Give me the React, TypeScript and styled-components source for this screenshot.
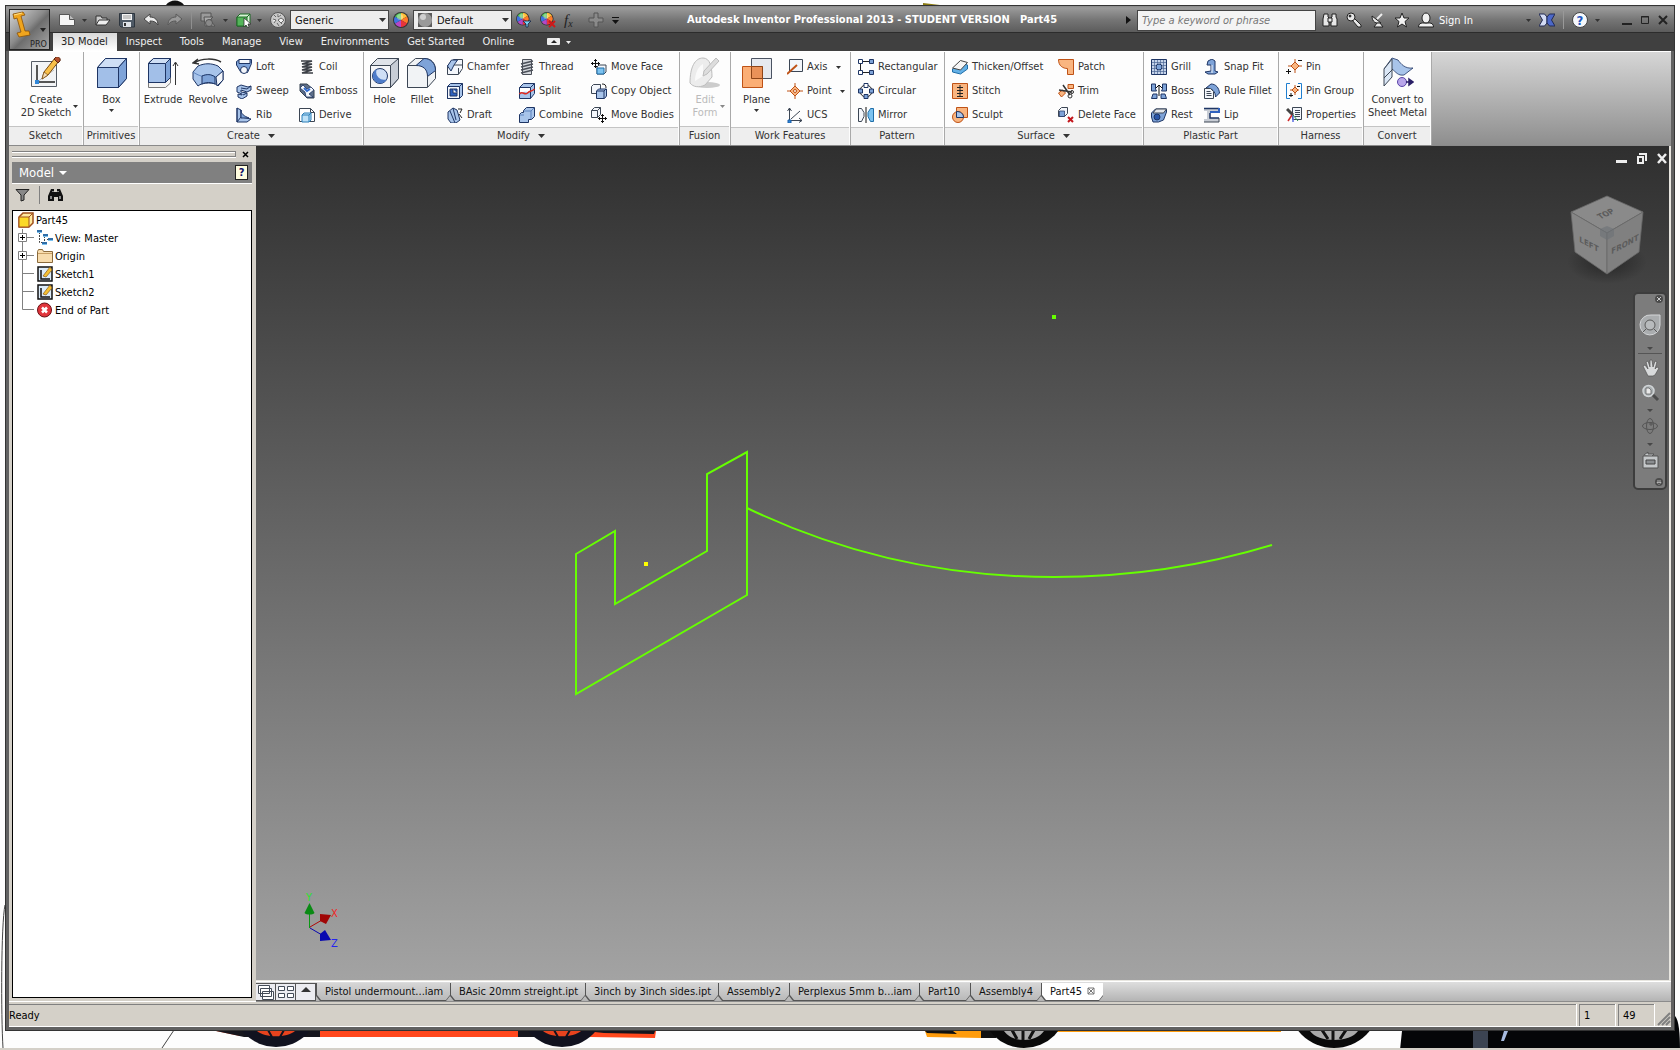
import React from "react";
import styled, { createGlobalStyle, css } from "styled-components";

const FONT = `"DejaVu Sans Condensed", "DejaVu Sans", "Noto Sans", sans-serif`;

const GlobalStyle = createGlobalStyle`
  *, *::before, *::after { box-sizing: border-box; }
  body { margin: 0; background: #fdfdfd; font-family: ${FONT}; font-size: 11px; color: #333; overflow: hidden; }
  button, input, select { font: inherit; color: inherit; }
  button { background: none; border: 0; padding: 0; margin: 0; cursor: default; }
  svg { display: block; flex: none; }
  ul { list-style: none; margin: 0; padding: 0; }
`;

/* ---------- shared palette for the drawings ---------- */
const N = "#1e3564";
const L = "#a8c4ea";
const M = "#7ea3d8";
const W = "#f3f6fb";
const G = "#3c4654";
const O = "#f9b580";
const OD = "#bf5216";

const Caret = ({ color = "#333", size = 5 }: { color?: string; size?: number }) => (
  <svg width={size} height={Math.ceil(size / 2)} viewBox="0 0 6 3" preserveAspectRatio="none" aria-hidden="true">
    <path d="M0 0h6L3 3z" fill={color} />
  </svg>
);

const art: Record<string, React.ReactNode> = {
  newFile: <g><path d="M.5 2.500h10l5 5v6H.5z" fill="#f4f4f4" stroke="#555" /><path d="M10.500 2.500v5h5" fill="#bbb" stroke="#555" /></g>,
  open: <g><path d="M1 13V4h5l1 2h5v2" fill="#ccc" stroke="#333" /><path d="M1 13l3-5h11l-4 5z" fill="#eee" stroke="#333" /></g>,
  save: <g><path d="M.5 1.500h15v13.500H2L.5 13.500z" fill="#4f5a66" stroke="#2d353e" /><path d="M3 2h10v6H3z" fill="#f4f4f4" /><path d="M4 4h8M4 6h8" stroke="#999" /><path d="M4 10h8v5H4z" fill="#dfe3e8" /><path d="M5 11h2v3H5z" fill="#333" /></g>,
  undo: <path d="M1 7l6-5v3c5 0 8 3 8 8-2-3-4-4-8-4v3z" fill="#ececec" stroke="#444" />,
  redo: <path d="M15 7L9 2v3c-5 0-8 3-8 8 2-3 4-4 8-4v3z" fill="#999" stroke="#5a5a5a" />,
  update: <g stroke="#555" fill="#9a9a9a"><path d="M1 1h10v8H1z" /><path d="M4 5h9l-3 3 5 6H5z" fill="#aaa" /><circle cx="9" cy="11" r="3.500" fill="#8a8a8a" /></g>,
  selectCube: <g><path d="M1 5l3-3h10v9l-3 3H1z" fill="#d8f3d6" stroke="#1c6a24" /><path d="M1 5h10v9H1z" fill="#54b45a" stroke="#1c6a24" /><path d="M11 5l3-3" stroke="#1c6a24" /><path d="M8 6v9l2-2 2 3 1-1-1-3h3z" fill="#fff" stroke="#333" strokeWidth=".8" /></g>,
  sphere: <g><circle cx="8" cy="8" r="7.500" fill="#c9c9c9" stroke="#555" /><path d="M4 3l2 2M8 2v3l3-2M3 7l3 1-2 3M8 8l3-2 3 2-3 3zM7 11l2 3M11 12l1-1" stroke="#666" fill="#f4f4f4" /></g>,
  wheel: <g stroke="none"><circle cx="8" cy="8" r="8" fill="#333" /><path d="M8 8V1a7 7 0 0 1 6 3.500z" fill="#ffc038" /><path d="M8 8l6-3.500a7 7 0 0 1 0 7z" fill="#ff7a2a" /><path d="M8 8l6 3.500A7 7 0 0 1 8 15z" fill="#e8343a" /><path d="M8 8v7a7 7 0 0 1-6-3.500z" fill="#b548c8" /><path d="M8 8l-6 3.500a7 7 0 0 1 0-7z" fill="#3f74e0" /><path d="M8 8L2 4.500A7 7 0 0 1 8 1z" fill="#53c25a" /><circle cx="7" cy="5" r="3" fill="#fff" opacity=".35" /></g>,
  ball: <g><path d="M1 1h14v14H1z" fill="#5a5a5a" /><circle cx="8" cy="8" r="7" fill="#9a9a9a" /><circle cx="6" cy="5" r="3" fill="#ddd" opacity=".8" /></g>,
  plus: <path d="M6 1h4v5h5v4h-5v5H6v-5H1V6h5z" fill="#8a8a8a" stroke="#555" />,
  binoc: <g fill="#e8e8e8" stroke="#222"><path d="M2 2h4v3l1 1v8H1V7zM10 2h4v3l1 2v7H9V6l1-1z" /><path d="M6 6h4v4H6z" /></g>,
  key: <g fill="#e8e8e8" stroke="#222"><path d="M6 8l2-2 7 7v2h-3z" /><circle cx="5" cy="5" r="4" /><circle cx="4" cy="4" r="1" fill="#333" /></g>,
  dish: <g fill="#e8e8e8" stroke="#222"><path d="M2 4c0 6 4 8 9 7z" /><path d="M7 11l-3 4h9l-3-4z" /><path d="M7 7l5-5" stroke="#eee" strokeWidth="2" /></g>,
  star: <path d="M8 1l2 5h5l-4 3.500 1.500 5.500L8 12l-4.500 3L5 9.500 1 6h5z" fill="#f2f2f2" stroke="#222" />,
  user: <g fill="#f0f0f0" stroke="#222"><path d="M.5 15c0-3 2-4 4-4h7c2 0 4 1 4 4z" /><ellipse cx="8" cy="6" rx="4" ry="5" /></g>,
  xchange: <g><path d="M0 2h5.500L8 5v6l-2.500 3H0l3.500-6z" fill="#d4dcf4" stroke="#222a55" /><path d="M16 2h-5.500L8 5v6l2.500 3H16l-3.500-6z" fill="#4c68c8" stroke="#222a55" /></g>,
  help: <g><circle cx="8" cy="8" r="7.500" fill="#f6f8fc" stroke="#444" /><text x="8" y="12.500" textAnchor="middle" fontSize="13" fontWeight="700" fill="#1e56c0">?</text></g>,

  loft: <g stroke={N}><path d="M.5 2.500l3-2h12v4l-4 9H5L.5 6z" fill={M} /><path d="M3 .5h11v4H3z" fill={W} /><circle cx="8" cy="11" r="3.500" fill={W} /></g>,
  sweep: <g stroke={N} fill={L}><path d="M1 4l4-2 7 2 3-1v4l-4 2-6-2v2l6 1v3l-5 3-4-2v-3l4 1V11L1 9z" /><path d="M5 5l6 1 4-3M7 12l4-2" fill="none" /></g>,
  rib: <g stroke={N}><path d="M1 1l4 2v7l10 2-4 3H1z" fill={L} /><path d="M5 3c0 4 3 6 8 8H5z" fill={M} /><path d="M1 1v14l4-5" fill="none" /></g>,
  coil: <g fill="none" stroke="#3b3f46" strokeWidth="1.500"><path d="M2 2h11L3 5h10L3 8h10L3 11h10L3 14h11" /></g>,
  emboss: <g><path d="M1 1h7l7 6v8H8L1 8z" fill="#5d6f89" stroke="#35404f" /><path d="M1 5l3-3 4 4 4-2 3 3-5 4 4 3H7L6 9z" fill="#f4f7fb" stroke={N} strokeWidth=".8" /><path d="M5 5l3 3 3-2" stroke="#2f6bd0" strokeWidth="2" fill="none" /></g>,
  derive: <g><path d="M.5 1.500h11l4 4v9H.5z" fill="#fff" stroke={G} /><path d="M11.500 1.500v4h4" fill="none" stroke={G} /><path d="M3 8l2-2h7v7l-2 2H3zM3 8h7v7M10 8l2-2" fill="#bfe2f8" stroke="#2a7fb8" /></g>,
  chamfer: <g stroke={G}><path d="M.5 6.500l6-6h9v9l-4 6H.5z" fill={W} /><path d="M.5 7l4-6h6L7 6l-3 6z" fill={L} stroke={N} /><path d="M7 6h8M11.500 15V9" fill="none" /></g>,
  shell: <g stroke={N}><path d="M.5 3.500l3-3h12v12l-3 3H.5z" fill={L} /><path d="M.5 3.500h12v12H.5z" fill={W} /><path d="M12.500 3.500l3-3" /><path d="M3 6h7v7H3z" fill="#2f62c0" /><path d="M6 6v4h4" fill={W} /></g>,
  draft: <g stroke={N}><path d="M1 5l5-4 4 2 3 10-4 3H4L1 12z" fill={L} /><path d="M6 1l3 12M3 4l5 12" fill="none" /><path d="M12 7l3 4M11 2l4 0-2 4" stroke="#222" fill="none" /></g>,
  thread: <g stroke="#4a4f58"><path d="M3.500.5h9v15h-9z" fill="#d4d7dc" /><path d="M2 5l12-3M2 8l12-3M2 11l12-3M2 14l12-3" strokeWidth="1.500" /></g>,
  split: <g><path d="M.5 4.500l4-4h11v10l-4 5H.5z" fill={L} stroke={N} /><path d="M.5 4.500h11v11M11.500 4.500l4-4" fill="none" stroke={N} /><path d="M1 5h10v4c-4 0-5-1-10 1z" fill="#fff" /><path d="M.5 11c3-4 5 2 8-1s4-1 7-4" stroke="#e02a20" strokeWidth="1.500" fill="none" /></g>,
  combine: <g stroke={N}><path d="M4.500 3.500l3-3h8v9l-3 3h-3v3h-9v-8l2-2h2z" fill={L} /><path d="M5 4h7v8M12 4l3-3M1 8h4" fill="none" stroke="#5c82bd" /></g>,
  moveFace: <g><path d="M6 8l2-2h7v7l-2 2H6z" fill={W} stroke={G} /><path d="M6 9h7v6H6z" fill="#7cc2f0" stroke="#1f6ea8" /><path d="M4.500 0v9M0 4.500h9M3 1.500h3M3 7.500h3M1.500 3v3M7.500 3v3" stroke="#111" /></g>,
  copyObject: <g stroke={N}><path d="M.5 3.500l2-2h7v7l-2 2h-7z" fill={W} stroke={G} /><path d="M5.500 8l2-2h8v7l-2 2.500h-8z" fill={L} /><path d="M6 8h7v7M13 8l2-2" fill="none" /><path d="M11 1c3 0 4 1 4 4" fill="none" stroke="#222" /></g>,
  moveBodies: <g><path d="M.5 3.500l3-3h6v7l-3 3h-6zM.5 3.500h6v7M6.500 3.500l3-3" fill={W} stroke={G} /><path d="M11.500 7v9M7 11.500h9M10 8.500h3M10 14.500h3M8.500 10v3M14.500 10v3" stroke="#111" /></g>,
  axis: <g><path d="M2.500.5h13v12h-13z" fill={W} stroke={G} /><path d="M0 15L10 6" stroke={OD} strokeWidth="2" /></g>,
  point: <g stroke={OD}><path d="M8 3l5 5-5 5-5-5z" fill={O} /><path d="M8 0v3M8 13v3M0 8h3M13 8h3" /><circle cx="8" cy="8" r="1.500" fill="#fff" /></g>,
  ucs: <g stroke={G} fill="none"><path d="M2.500 1v12.500H15M4 12l9-8M.5 4l2-3 2 3M12 11l3 2.500-3 2" /><path d="M1 13h3v3H1z" fill="#2f86d8" stroke="#1b5fa8" /></g>,
  rect: <g fill={L} stroke={N}><path d="M2.500 2.500h12M2.500 13.500h12M2.500 2v12" stroke="#222" /><path d="M.5.5h4v4h-4zM.5 11.500h4v4h-4z" fill="#fff" /><path d="M11.500.5h4v4h-4zM11.500 11.500h4v4h-4z" fill={M} /></g>,
  circ: <g fill={M} stroke={N}><circle cx="8" cy="8" r="6" fill="none" stroke="#222" /><path d="M6 .5h4v4H6z" fill="#fff" /><path d="M.5 6h4v4h-4zM11.500 6h4v4h-4zM6 11.500h4v4H6z" /></g>,
  mirror: <g><path d="M.5 1.500h3l2.500 4v4l-2.500 5h-3z" fill={W} stroke={G} /><path d="M15.500 1.500h-3L10 5.500v4l2.500 5h3z" fill="#7cc2f0" stroke="#1f6ea8" /><path d="M8 0v16" stroke="#111" /></g>,
  thicken: <g><path d="M.5 10l8-6 7 2v4l-7 5-8-2z" fill="#63b0e6" stroke="#1f6ea8" /><path d="M.5 9l8-7.500 7 2-7 7.500z" fill="#f6f6f6" stroke="#444" /></g>,
  stitch: <g><path d="M.5.5h15v15H.5z" fill={O} stroke={OD} /><path d="M8 2v12M5 4.500h6M5 7.500h6M5 10.500h6M5 13.500h6" stroke="#222" /></g>,
  sculpt: <g><path d="M4.500.5h11v10h-11z" fill={O} stroke={OD} /><circle cx="6" cy="10" r="5.500" fill={O} stroke={OD} /><path d="M4.500 4.500c4 0 7 2 7 6h-7z" fill={L} stroke={N} /></g>,
  patch: <path d="M.5.5h15v15H9.500V9.500C5 9.500.5 7 .5.5z" fill={O} stroke={OD} />,
  trim: <g><path d="M10 1.500h5.500v4H10zM.5 10l4-3 3 3-4 4z" fill={O} stroke={OD} /><path d="M5 2l7 10M1 7l13 2" stroke="#333" strokeWidth="1.500" /><circle cx="12" cy="13" r="2" fill="none" stroke="#333" /><circle cx="14" cy="9" r="1.500" fill="none" stroke="#333" /></g>,
  deleteFace: <g><path d="M.5 3.500l3-3h6v6l-3 3h-6z" fill={W} stroke={G} /><path d="M1.500 4h5v5.500h-5z" fill={M} stroke={N} strokeWidth=".7" /><path d="M10 10l5 5M15 10l-5 5" stroke="#c3161c" strokeWidth="2" /></g>,
  grill: <g><path d="M.5.5h15v15H.5z" fill="#c6d4ea" stroke={N} /><path d="M3.500 1v14M6.500 1v14M9.500 1v14M12.500 1v14M1 3.500h14M1 6.500h14M1 9.500h14M1 12.500h14" stroke="#4b6594" strokeWidth=".7" /><circle cx="8" cy="8" r="3" fill={M} stroke={N} /></g>,
  boss: <g stroke={N}><path d="M.5 1h4v5l1 2h-5zM15.500 1h-4v5l-1 2h5zM2 11h4v4.500H.5zM14 11h-4v4.500h5.500z" fill={M} /><path d="M8 13V2M5 5l3-3 3 3" stroke="#111" fill="none" /></g>,
  rest: <g stroke={N}><path d="M.5 6l4-4h11v3l-3 8-5 2H2L.5 10z" fill={M} /><path d="M5 2h10.500l-3 4H2z" fill="#e4e7ec" stroke={G} /><ellipse cx="6" cy="10" rx="3" ry="3" fill="#2a56a8" /></g>,
  snap: <g stroke={N}><path d="M4 2l4-2 3 2v10l3 1-3 2H4l-3-2 6-1V6L3 6z" fill={M} /><path d="M8 6v8" stroke={W} /></g>,
  ruleFillet: <g><path d="M2 5l5-4c5 0 8 4 8.500 9l-4 4c0-5-3-9-9.500-9z" fill={M} stroke={N} /><path d="M.5 5.500h6l3 3v7h-9z" fill={W} stroke={G} /><path d="M2.500 8.500h4M2.500 10.500h5M2.500 12.500h5" stroke={G} /></g>,
  lip: <g><path d="M0 1h15v5H6v5h9v4H0v-3h3V4H0z" fill="#c7ccd4" stroke="none" /><path d="M0 1.500h15M6 6v5h9" stroke={N} strokeWidth="1.500" fill="none" /><path d="M15 1v4H6" stroke="#2f62c0" fill="none" strokeWidth="2" /><path d="M0 15h15v-4" stroke={G} fill="none" /></g>,
  pin: <g stroke={OD}><path d="M9 3l4 4-4 4-4-4z" fill={O} /><path d="M9 0v3M9 11v3M2 7h3M13 7h3" /><path d="M0 12.500h5M2.500 10v5M12 1.500h4" stroke="#111" /></g>,
  pinGroup: <g stroke={OD}><path d="M4 .5H.5v15H4M12 .5h3.500v15H12" fill="none" stroke="#1f7fd0" /><path d="M9 4l3 3-3 3-3-3z" fill={O} /><path d="M9 2v2M9 10v2M4 7h2M12 7h1" /><path d="M3 12.500h4M5 10v4M11 3.500h3" stroke="#111" /></g>,
  props: <g><path d="M6.500.5h9v12h-9z" fill={W} stroke={G} /><path d="M9 3.500h5M9 5.500h5M9 7.500h5M9 9.500h5" stroke={G} /><path d="M1 2l6 6" stroke="#444" strokeWidth="3" /><path d="M6 8l-4 6" stroke="#d02a2a" strokeWidth="1.500" /><path d="M7 8v7" stroke="#5a6de0" strokeWidth="1.500" /><path d="M7 8l5 6" stroke="#2a8f4a" /></g>,

  sketch: <g><path d="M1.500 4.500h25v25h-25z" fill="#f2f4f6" stroke="#555c66" /><path d="M7 8v17h18" fill="none" stroke="#222" strokeWidth="1.500" /><path d="M7 25l17-12" stroke="#bbb" /><path d="M5 23h4v4H5z" fill="#2f86d8" /><path d="M12 22l2-7L25 1l4 3-11 14z" fill="#f8c04a" stroke="#7a4a10" /><path d="M24 2l2-2c2-1 5 1 4 4l-2 2z" fill="#b5502c" stroke="#5c2a14" /><path d="M14 15l4 3-6 4z" fill="#f3dcb4" stroke="#7a4a10" strokeWidth=".7" /></g>,
  box: <g stroke={N}><path d="M1.500 10.500l8-9h21v20l-8 9h-21z" fill={L} /><path d="M1.500 10.500h21v20h-21z" fill="#a2bfe8" /><path d="M1.500 10.500l8-9h21l-8 9z" fill="#cfdff5" /><path d="M22.500 10.500l8-9v20l-8 9z" fill={M} /></g>,
  extrude: <g stroke={N}><path d="M1.500 24h17l5-4v6l-5 4.500h-17z" fill="#f3f3f3" stroke="#777" /><path d="M1.500 6l5-4.500h17v19l-5 5h-17z" fill={M} /><path d="M1.500 6.500h17v19h-17z" fill="#a2bfe8" /><path d="M1.500 6.500l5-5h17l-5 5z" fill="#cfdff5" /><path d="M28.500 28V6M26 9l2.500-4L31 9" stroke="#333" fill="none" /></g>,
  revolve: <g stroke={N}><path d="M1 15l5-6c7-3 13-3 20 0l5 5v9l-5 6c-2-4-16-4-20 0L1 22z" fill={L} /><path d="M1 15c6 4 9 4 9 4s6-3 14 1l7-6" fill="none" stroke="#5b82bd" /><path d="M10 19c5-2 9-2 13 1v7c-4-2-9-2-13 0z" fill={M} /><path d="M24 20l7-6v9l-6 6z" fill={W} /><path d="M2 6C10 1 22 1 29 5M6 2L1 6l6 1" stroke="#333" strokeWidth="1.500" fill="none" /></g>,
  hole: <g stroke={G}><path d="M1.500 8.500l7-7h21v20l-8 9h-20z" fill="#dfe3e9" /><path d="M1.500 8.500h20v22h-20z" fill="#f4f5f7" /><path d="M21.500 8.500l8-7v20l-8 9z" fill="#c7cdd6" /><circle cx="11" cy="19" r="7.500" fill="#cfdff5" stroke={N} /><path d="M8 12a7.500 7.500 0 0 0 10 10 7.500 7.500 0 1 1-10-10z" fill="#4d7bc8" stroke="none" /></g>,
  fillet: <g stroke={G}><path d="M1.500 8.500l8-7h9c7 0 11 5 11 12v8l-8 9h-20z" fill="#f1f3f5" /><path d="M10 8.500l8-7c7 0 11.500 5 11.500 12l-8 6c0-7-4-11-11.500-11z" fill={M} stroke={N} /><path d="M1.500 8.500h9M21.500 19v11M18 30.500h3" fill="none" /></g>,
  form: <g stroke="#bdbdbd"><ellipse cx="18" cy="28" rx="13" ry="3" fill="#ccc" stroke="none" /><path d="M1 26C1 10 6 1 14 1c7 0 9 9 9 19l-7 8c-6 3-12 2-15-2z" fill="#ececec" /><path d="M6 24c0-8 3-14 8-17v12z" fill="#fafafa" stroke="none" /><path d="M14 19l1-5L27 1l3 3-12 13z" fill="#ddd" /></g>,
  plane: <g><path d="M10.500 1.500h20v20h-20z" fill="#e6e9ef" stroke="#4a5362" /><path d="M1.500 9.500h20v21h-20z" fill="#fba566" fillOpacity=".9" stroke={OD} /><path d="M10.500 9.500h11v12h-11z" fill="#ea9158" stroke="#8e4417" /></g>,
  sheet: <g><path d="M2 12L10 1l6 2c3 4 7 9 15 8l-9 7c-6 1-8-3-12-6z" fill={L} stroke={N} strokeWidth=".8" /><path d="M2 12L10 2v18l-8 9z" fill="#dbe7f6" stroke={G} /><path d="M2 21l9-9" stroke={G} /><circle cx="20" cy="25" r="4.500" fill="#b9a6ea" stroke="#5a45a8" /><path d="M24 25h7M27 22l4 3-4 3z" stroke="#2a1f66" fill="#2a1f66" strokeWidth="1.500" /></g>,

  part: <g><path d="M1 5l4-4h10v10l-4 4H1z" fill="#ffe9a0" stroke="#a0501c" strokeWidth="1.500" /><path d="M1 5h10v10H1z" fill="#fbd928" stroke="#a0501c" /><path d="M11 5l4-4" stroke="#a0501c" /></g>,
  view: <g><path d="M2.500 2v10.500h3M7.500 6v7M7 5.500h3M10 9.500h5" stroke="#444" fill="none" strokeDasharray="2 1" /><path d="M0 0h5v3H0zM6 4h5v3H6zM11 8h5v3h-5zM5 12h5v3H5z" fill="#2f6ea8" /><path d="M0 2h5v1H0zM6 6h5v1H6zM11 10h5v1h-5zM5 14h5v1H5z" fill="#7cc2f0" /></g>,
  folder: <g><path d="M.5 3.500l1-2h4l1 2h9v11H.5z" fill="#f7dcae" stroke="#8a6a3c" /><path d="M1 5.500h14" stroke="#c8a066" /></g>,
  sketchSmall: <g><path d="M1 1h14v14H1z" fill="#dcebf8" stroke="#111" strokeWidth="1.500" /><path d="M4 4v9h9" stroke="#111" fill="none" strokeWidth="1.500" /><path d="M6 10l7-9 2 3-6 7z" fill="#f6c032" stroke="#8a5a14" strokeWidth=".7" /></g>,
  end: <g><circle cx="7.500" cy="8" r="7" fill="#e0353c" stroke="#6a1014" /><path d="M5 5.500l5 5M10 5.500l-5 5" stroke="#fff" strokeWidth="2.500" /></g>,
};

const Icon = ({ name, size = 16 }: { name: string; size?: number }) => (
  <svg width={size} height={size} viewBox={`0 0 ${size > 16 ? 32 : 16} ${size > 16 ? 32 : 16}`} fill="none" aria-hidden="true">
    {art[name]}
  </svg>
);

/* ---------- desktop and window ---------- */
const Desktop = styled.div`
  position: relative;
  display: flex;
  flex-direction: column;
  height: 100vh;
  padding: 5px 5px 19px;
`;
const Wallpaper = styled.svg`
  position: absolute;
  left: 0;
  bottom: 0;
`;
const Window = styled.main`
  position: relative;
  flex: 1;
  min-height: 0;
  display: flex;
  flex-direction: column;
  background: #616161;
  border: 1px solid #333;
  padding: 0 3px 3px;
`;

/* ---------- title and menu ---------- */
const Head = styled.header`
  display: flex;
  margin: 0 -3px;
  height: 45px;
  background: linear-gradient(#8b8b8b 0, #9a9a9a 2px, #757575 14px, #5c5c5c 26px, #2c2c2c 26px, #2c2c2c 27px, #404040 27px);
`;
const AppButton = styled.button`
  position: relative;
  width: 41px;
  height: 41px;
  margin: 3px 3px 0;
  background: linear-gradient(135deg, #d8d8d8, #8b8b8b 45%, #6d6d6d 55%, #a8a8a8);
  border: 1px solid #222;
  display: flex;
  align-items: flex-start;
`;
const HeadRows = styled.div`flex: 1; min-width: 0;`;
const TitleBar = styled.div`
  display: flex;
  align-items: center;
  height: 27px;
  padding: 1px 5px 0 6px;
`;
const Quick = styled.div`display: flex; align-items: center; gap: 8px; width: 628px; flex: none;`;
const Tool = styled.button<{ $w?: number }>`
  display: flex;
  align-items: center;
  justify-content: space-between;
  width: ${(p) => p.$w ?? 16}px;
  height: 20px;
`;
const Rule = styled.span<{ $color?: string }>`width: 1px; height: 18px; background: ${(p) => p.$color ?? "#8f8f8f"};`;
const Fx = styled.span`
  font: italic 15px/16px "Liberation Serif", serif;
  color: #222;
  sub { font-size: 10px; line-height: 8px; vertical-align: -2px; }
`;
const Combo = styled.span`
  position: relative;
  display: flex;
  align-items: center;
  width: 99px;
  height: 20px;
  margin: 0 -4px;
  background: #ededed;
  border: 1px solid #444;
  > svg:first-of-type { margin-left: 3px; }
  > svg:last-child { position: absolute; right: 2px; pointer-events: none; }
`;
const ComboSelect = styled.select`
  appearance: none;
  flex: 1;
  min-width: 0;
  height: 18px;
  padding: 0 2px 0 4px;
  border: 0;
  outline: 0;
  background: transparent;
  color: #111;
`;
const Title = styled.h1`
  flex: 1;
  margin: 0;
  font-size: 11px;
  line-height: 16px;
  font-weight: 700;
  color: #fff;
  white-space: pre;
`;
const Search = styled.input`
  width: 179px;
  height: 21px;
  margin: 0 6px;
  padding: 0 4px;
  border: 1px solid #444;
  background: #f4f4f4;
  font-size: 11px;
  font-style: italic;
  &::placeholder { color: #777; opacity: 1; }
`;
const Info = styled.div`display: flex; align-items: center; gap: 8px; width: 299px;`;
const SignIn = styled.button`display: flex; align-items: center; gap: 5px; width: 113px; justify-content: flex-start; color: #fff; > :last-child { margin-left: auto; }`;
const WinControls = styled.div`display: flex; align-items: center; gap: 6px;`;
const MenuBar = styled.nav`display: flex; align-items: flex-end; height: 18px;`;
const MenuTab = styled.button<{ $on?: boolean }>`
  height: 18px;
  padding: 0 9px;
  line-height: 16px;
  color: #eee;
  ${(p) => p.$on && css`padding: 0 9px 0 8px; color: #222; background: linear-gradient(#d8d8d8, #fff);`}
`;
const MenuToggle = styled.button`display: flex; align-items: center; gap: 5px; height: 18px; margin-left: 24px;`;

/* ---------- ribbon ---------- */
const Ribbon = styled.section`
  display: flex;
  height: 95px;
  border-top: 1px solid #fff;
  border-bottom: 1px solid #8a8a8a;
  background: linear-gradient(#d6d6d6, #8e8e8e);
`;
const Panel = styled.div`
  display: flex;
  flex-direction: column;
  background: #fdfdfd;
  border-right: 1px solid #a9a9a9;
  padding-right: 1px;
`;
const PanelBody = styled.div`display: flex; flex: 1; padding: 3px 0 0 1px;`;
const PanelLabel = styled.div`
  display: flex;
  justify-content: center;
  align-items: center;
  gap: 8px;
  height: 19px;
  padding-bottom: 2px;
  border-top: 1px solid #c4c4c4;
  background: #eee;
`;
const Column = styled.div<{ $w: number }>`width: ${(p) => p.$w}px; flex: none;`;
const SmallButton = styled.button`
  display: flex;
  align-items: center;
  gap: 4px;
  height: 24px;
  line-height: 16px;
  white-space: nowrap;
  > svg:nth-of-type(2) { margin-left: 4px; }
`;
const BigButton = styled.button<{ $w: number; $off?: boolean }>`
  position: relative;
  display: flex;
  flex-direction: column;
  align-items: center;
  width: ${(p) => p.$w}px;
  padding-top: 2px;
  line-height: 13px;
  text-align: center;
  white-space: pre;
  ${(p) => p.$off && css`color: #bbb;`}
`;
const BigText = styled.span`margin-top: 4px;`;
const BelowCaret = styled.span`margin-top: 3px;`;
const SideCaret = styled.span`position: absolute; right: 4px; bottom: 18px;`;

type Big = { icon: string; text: string; w: number; caret?: "below" | "side"; off?: boolean };
type Small = { w: number; items: [string, string, boolean?][] };
type Group = { label: string; menu?: boolean; pad?: number; big?: Big[]; small?: Small[] };

const groups: Group[] = [
  { label: "Sketch", big: [{ icon: "sketch", text: "Create\n2D Sketch", w: 72, caret: "side" }] },
  { label: "Primitives", big: [{ icon: "box", text: "Box", w: 53, caret: "below" }] },
  {
    label: "Create", menu: true, pad: 5,
    big: [{ icon: "extrude", text: "Extrude", w: 44 }, { icon: "revolve", text: "Revolve", w: 46 }],
    small: [
      { w: 63, items: [["loft", "Loft"], ["sweep", "Sweep"], ["rib", "Rib"]] },
      { w: 63, items: [["coil", "Coil"], ["emboss", "Emboss"], ["derive", "Derive"]] },
    ],
  },
  {
    label: "Modify", menu: true, pad: 7,
    big: [{ icon: "hole", text: "Hole", w: 39 }, { icon: "fillet", text: "Fillet", w: 36 }],
    small: [
      { w: 72, items: [["chamfer", "Chamfer"], ["shell", "Shell"], ["draft", "Draft"]] },
      { w: 72, items: [["thread", "Thread"], ["split", "Split"], ["combine", "Combine"]] },
      { w: 87, items: [["moveFace", "Move Face"], ["copyObject", "Copy Object"], ["moveBodies", "Move Bodies"]] },
    ],
  },
  { label: "Fusion", big: [{ icon: "form", text: "Edit\nForm", w: 48, caret: "side", off: true }] },
  {
    label: "Work Features", pad: 6,
    big: [{ icon: "plane", text: "Plane", w: 49, caret: "below" }],
    small: [{ w: 62, items: [["axis", "Axis", true], ["point", "Point", true], ["ucs", "UCS"]] }],
  },
  { label: "Pattern", pad: 6, small: [{ w: 85, items: [["rect", "Rectangular"], ["circ", "Circular"], ["mirror", "Mirror"]] }] },
  {
    label: "Surface", menu: true, pad: 6,
    small: [
      { w: 106, items: [["thicken", "Thicken/Offset"], ["stitch", "Stitch"], ["sculpt", "Sculpt"]] },
      { w: 84, items: [["patch", "Patch"], ["trim", "Trim"], ["deleteFace", "Delete Face"]] },
    ],
  },
  {
    label: "Plastic Part", pad: 6,
    small: [
      { w: 53, items: [["grill", "Grill"], ["boss", "Boss"], ["rest", "Rest"]] },
      { w: 73, items: [["snap", "Snap Fit"], ["ruleFillet", "Rule Fillet"], ["lip", "Lip"]] },
    ],
  },
  { label: "Harness", pad: 6, small: [{ w: 76, items: [["pin", "Pin"], ["pinGroup", "Pin Group"], ["props", "Properties"]] }] },
  { label: "Convert", big: [{ icon: "sheet", text: "Convert to\nSheet Metal", w: 65 }] },
];
const ColumnSet = styled.div<{ $pad: number }>`display: flex; padding-left: ${(p) => p.$pad}px;`;

const RibbonGroup = ({ g }: { g: Group }) => (
  <Panel>
    <PanelBody>
      {g.big?.map((b) => (
        <BigButton key={b.text} $w={b.w} $off={b.off}>
          <Icon name={b.icon} size={32} />
          <BigText>{b.text}</BigText>
          {b.caret === "below" && <BelowCaret><Caret /></BelowCaret>}
          {b.caret === "side" && <SideCaret><Caret color={b.off ? "#888" : "#333"} /></SideCaret>}
        </BigButton>
      ))}
      {g.small && (
        <ColumnSet $pad={g.pad ?? 0}>
          {g.small.map((c, i) => (
            <Column key={i} $w={c.w}>
              {c.items.map(([icon, text, menu]) => (
                <SmallButton key={text}><Icon name={icon} />{text}{menu && <Caret />}</SmallButton>
              ))}
            </Column>
          ))}
        </ColumnSet>
      )}
    </PanelBody>
    <PanelLabel>{g.label}{g.menu && <Caret size={7} />}</PanelLabel>
  </Panel>
);

/* ---------- browser panel ---------- */
const Work = styled.div`flex: 1; min-height: 0; display: flex; background: #d4d0c8;`;
const Side = styled.aside`
  width: 247px;
  flex: none;
  display: flex;
  flex-direction: column;
  padding: 2px 4px 3px 3px;
  border-bottom: 1px solid #fff;
  background: #d4d0c8;
`;
const Grip = styled.div`display: flex; align-items: center; gap: 6px; height: 12px; padding-right: 2px;`;
const GripBars = styled.span`flex: 1; height: 6px; border: solid #808080; border-width: 1px 1px 1px 0; box-shadow: inset 0 1px #fff, 0 1px #fff;`;
const SideTitle = styled.div`
  display: flex;
  align-items: center;
  justify-content: space-between;
  height: 21px;
  margin-top: 2px;
  padding: 0 4px 0 7px;
  background: #808080;
  color: #fff;
`;
const SideMenu = styled.button`display: flex; align-items: center; gap: 5px; font-size: 13px; line-height: 16px;`;
const HelpButton = styled.button`width: 13px; height: 15px; background: #fffde0; border: 1px solid #222; color: #10106a; font-weight: 700; line-height: 12px;`;
const SideTools = styled.div`display: flex; align-items: center; gap: 8px; height: 27px; padding: 0 0 4px 3px; border-top: 1px solid #fff;`;
const Tree = styled.ul`flex: 1; border: 1px solid #000; background: #fff;`;
const Node = styled.li`
  display: flex;
  align-items: center;
  height: 18px;
  padding-left: 5px;
  color: #000;
`;
const NodeButton = styled.button`display: flex; align-items: center; gap: 2px; height: 18px; white-space: nowrap;`;
const Branch = ({ kind }: { kind: "plus" | "tee" | "last" }) => (
  <svg width="19" height="18" viewBox="0 0 19 18" aria-hidden="true">
    <path d={kind === "last" ? "M4.500 0V8.500H16" : "M4.500 0V18M4.500 8.500H16"} stroke="#808080" fill="none" />
    {kind === "plus" && <><path d="M.5 4.500h8v8h-8z" fill="#fff" stroke="#808080" /><path d="M2 8.500h5M4.500 6v5" stroke="#000" /></>}
  </svg>
);

/* ---------- graphics area ---------- */
const Main = styled.section`flex: 1; min-width: 0; display: flex; flex-direction: column;`;
const Canvas = styled.div`
  position: relative;
  flex: 1;
  min-height: 0;
  background: linear-gradient(#2f2f2f, #a3a3a3);
  border: solid #e8e6e0;
  border-width: 0 2px 1px 0;
`;
const Fill = styled.svg`position: absolute; inset: 0; width: 100%; height: 100%;`;
const DocControls = styled.div`position: absolute; top: 6px; right: 1px; display: flex; gap: 7px;`;
const Cube = styled.svg`position: absolute; top: 46px; right: 22px;`;
const Triad = styled.svg`position: absolute; left: 42px; bottom: 26px;`;
const NavBar = styled.div`
  position: absolute;
  top: 146px;
  right: 2px;
  width: 34px;
  height: 198px;
  border: 2px solid #3d3d3d;
  border-radius: 5px;
  background: #7c7c7c;
`;
const TabStrip = styled.div`
  display: flex;
  height: 21px;
  padding-top: 1px;
  border-top: 1px solid #fff;
  border-bottom: 1px solid #8c8c8c;
  background: linear-gradient(#dedede, #b4b4b4);
`;
const StripButton = styled.button`width: 20px; display: flex; align-items: center; justify-content: center; border: 1px solid #555; border-left-width: 0; background: #ececf0;`;
const slant = `polygon(0 0, 100% 0, 100% calc(100% - 5px), calc(100% - 4px) 100%, 4px 100%, 0 calc(100% - 5px))`;
const DocTab = styled.button<{ $on?: boolean; $w: number }>`
  position: relative;
  z-index: 0;
  display: flex;
  align-items: center;
  gap: 5px;
  width: ${(p) => p.$w}px;
  height: 18px;
  padding: 0 0 2px 9px;
  background: #555;
  clip-path: ${slant};
  color: #111;
  white-space: nowrap;
  &::before {
    content: "";
    position: absolute;
    z-index: -1;
    inset: 0 0 1px 1px;
    clip-path: ${slant};
    background: ${(p) => (p.$on ? "#fff" : "linear-gradient(#d6d6d6, #b9b9b9)")};
  }
`;

/* ---------- status bar ---------- */
const Status = styled.footer`display: flex; gap: 3px; height: 25px; padding-top: 2px; background: #d4d0c8; border-bottom: 1px solid #fff;`;
const Pane = styled.div<{ $w?: number }>`
  ${(p) => (p.$w ? css`width: ${p.$w}px; padding-left: 4px;` : css`flex: 1;`)}
  border: 1px solid #808080;
  border-width: 1px 0 0 ${(p) => (p.$w ? 1 : 0)}px;
  box-shadow: 1px 0 #fff;
  line-height: 22px;
  color: #000;
`;

const docs: [string, number][] = [
  ["Pistol undermount...iam", 134], ["BAsic 20mm streight.ipt", 135], ["3inch by 3inch sides.ipt", 133],
  ["Assembly2", 71], ["Perplexus 5mm b...iam", 130], ["Part10", 51], ["Assembly4", 71], ["Part45", 62],
];

const Swatch = ({ mark }: { mark: "down" | "cross" }) => (
  <svg width="16" height="16" viewBox="0 0 16 16" aria-hidden="true">
    <g transform="scale(.85)">{art.wheel}</g>
    {mark === "down" ? <path d="M7 9h8l-3 3v3h-2v-3z" fill="#7cd4f4" stroke="#124" strokeWidth=".8" /> : <path d="M9 9l6 6M15 9l-6 6" stroke="#d01818" strokeWidth="2" />}
  </svg>
);

export default function App() {
  return (
    <Desktop>
      <GlobalStyle />
      <Wallpaper width="1680" height="1050" viewBox="0 0 1680 1050" aria-hidden="true">
        <path d="M166 5c4-6 14-6 18 0z" fill="#111" />
        <path d="M923 3l17 2h-17z" fill="#8a7a10" />
        <path d="M5 905c-4 20-4 110-2 143M174 1030l-12 18" stroke="#444" fill="none" />
        <path d="M216 1031h440l-1 7-65-1H320l-80-1z" fill="#ff471c" />
        <path d="M216 1031h104v6h-76zM518 1031h30v6h-30zM585 1031h70l-1 3-50-1z" fill="#15151c" />
        <circle cx="276" cy="1003" r="44" fill="#11121f" />
        <circle cx="562" cy="1003" r="44" fill="#11121f" />
        <path d="M257 1031h38c-8 7-30 7-38 0zM543 1031h38c-8 7-30 7-38 0z" fill="#e8431e" />
        <path d="M268 1030l4 7M284 1030l-4 7M554 1030l4 7M570 1030l-4 7" stroke="#11121f" strokeWidth="2" />
        <path d="M925 1031h356v1H990l-9 6-54-1z" fill="#ff9c0c" />
        <path d="M925 1031h28l4 3-30-1zM981 1031h15v7h-15z" fill="#111" />
        <circle cx="1024" cy="1005" r="43" fill="#0a0a0a" />
        <circle cx="1334" cy="1002" r="46" fill="#0a0a0a" />
        <path d="M1004 1031h40c-8 12-32 12-40 0zM1310 1031h48c-8 12-40 12-48 0z" fill="#aaa" />
        <path d="M1012 1030l5 9M1034 1030l-5 9M1023 1030v10M1322 1030l6 9M1346 1030l-6 9M1333 1030v10" stroke="#111" strokeWidth="3" />
        <path d="M1402 1031h273v-15c4 4 5 18 5 34h-280z" fill="#050608" />
        <path d="M1473 1031h15v17h-15z" fill="#3c4452" />
        <path d="M1504 1031h4l-4 10h-3z" fill="#a8bce0" />
        <path d="M0 1048h1680v2H0z" fill="#d4d0c8" />
      </Wallpaper>
      <Window>
        <Head>
          <AppButton aria-label="Application menu">
            <svg width="39" height="39" viewBox="0 0 39 39" aria-hidden="true">
              <path d="M3 4l10-2 2 3-4 1 4 15 4 0 1 4-11 2-2-4 4-1L7 8 4 9z" fill="#f0a51e" stroke="#8a5208" strokeWidth=".8" />
              <path d="M4 5l8-2" stroke="#ffe08a" />
              <path d="M30 18h6l-3 4z" fill="#222" />
              <text x="20" y="37" fontSize="9" fill="#222">PRO</text>
            </svg>
          </AppButton>
          <HeadRows>
            <TitleBar>
              <Quick>
                <Tool $w={28} aria-label="New"><Icon name="newFile" /><Caret color="#333" /></Tool>
                <Tool aria-label="Open"><Icon name="open" /></Tool>
                <Tool aria-label="Save"><Icon name="save" /></Tool>
                <Tool aria-label="Undo"><Icon name="undo" /></Tool>
                <Tool aria-label="Redo"><Icon name="redo" /></Tool>
                <Rule />
                <Tool $w={28} aria-label="Update"><Icon name="update" /><Caret /></Tool>
                <Tool $w={26} aria-label="Select"><Icon name="selectCube" /><Caret /></Tool>
                <Tool aria-label="Material"><Icon name="sphere" /></Tool>
                <Combo><ComboSelect aria-label="Material"><option>Generic</option></ComboSelect><Caret size={7} /></Combo>
                <Tool aria-label="Appearance browser"><Icon name="wheel" /></Tool>
                <Combo><Icon name="ball" /><ComboSelect aria-label="Appearance"><option>Default</option></ComboSelect><Caret size={7} /></Combo>
                <Tool aria-label="Adjust"><Swatch mark="down" /></Tool>
                <Tool aria-label="Clear"><Swatch mark="cross" /></Tool>
                <Tool aria-label="Parameters"><Fx>f<sub>x</sub></Fx></Tool>
                <Tool aria-label="Add"><Icon name="plus" /></Tool>
                <Tool $w={7} aria-label="Customize"><svg width="7" height="7" viewBox="0 0 7 7"><path d="M0 0h7v1H0zM0 3h7L3.500 7z" fill="#111" /></svg></Tool>
              </Quick>
              <Title>{"Autodesk Inventor Professional 2013 - STUDENT VERSION   Part45"}</Title>
              <svg width="5" height="8" viewBox="0 0 5 8" aria-hidden="true"><path d="M0 0l5 4-5 4z" fill="#111" /></svg>
              <Search aria-label="Search" placeholder="Type a keyword or phrase" />
              <Info>
                <Tool aria-label="Search"><Icon name="binoc" /></Tool>
                <Tool aria-label="Subscription"><Icon name="key" /></Tool>
                <Tool aria-label="Communication"><Icon name="dish" /></Tool>
                <Tool aria-label="Favorites"><Icon name="star" /></Tool>
                <SignIn><Icon name="user" />Sign In<Caret /></SignIn>
                <Tool aria-label="Exchange"><Icon name="xchange" /></Tool>
                <Rule $color="#999" />
                <Tool $w={28} aria-label="Help"><Icon name="help" /><Caret /></Tool>
              </Info>
              <WinControls>
                <button aria-label="Minimize"><svg width="12" height="12"><path d="M1 9h10v2H1z" fill="#222" /></svg></button>
                <button aria-label="Maximize"><svg width="12" height="12"><path d="M2.500 2.500h7v7h-7z" fill="none" stroke="#222" /><path d="M2 3h8" stroke="#222" /></svg></button>
                <button aria-label="Close"><svg width="12" height="12"><path d="M2 2l8 8M10 2l-8 8" stroke="#222" strokeWidth="2" /></svg></button>
              </WinControls>
            </TitleBar>
            <MenuBar>
              {["3D Model", "Inspect", "Tools", "Manage", "View", "Environments", "Get Started", "Online"].map((t, i) => (
                <MenuTab key={t} $on={i === 0}>{t}</MenuTab>
              ))}
              <MenuToggle aria-label="Minimize ribbon">
                <svg width="14" height="18" viewBox="0 0 14 18"><rect y="5" width="13" height="7" rx="1" fill="#eee" /><path d="M4 10l3-3 3 3z" fill="#222" /></svg>
                <Caret color="#eee" />
              </MenuToggle>
            </MenuBar>
          </HeadRows>
        </Head>

        <Ribbon aria-label="3D Model tools">
          {groups.map((g) => <RibbonGroup key={g.label} g={g} />)}
        </Ribbon>

        <Work>
          <Side>
            <Grip>
              <GripBars />
              <button aria-label="Close panel"><svg width="8" height="7"><path d="M1 1l5 5M6 1L1 6" stroke="#000" strokeWidth="1.500" /></svg></button>
            </Grip>
            <SideTitle>
              <SideMenu>Model<Caret color="#fff" size={8} /></SideMenu>
              <HelpButton>?</HelpButton>
            </SideTitle>
            <SideTools>
              <Tool aria-label="Filter"><svg width="16" height="16"><path d="M1 2.500h13L9 8v5l-3 1V8z" fill="#888" stroke="#222" /></svg></Tool>
              <Rule $color="#808080" />
              <Tool aria-label="Find"><svg width="16" height="16"><path d="M3 2h3v3h3V2h3l3 7v5h-5v-4H6v4H0V9z" fill="#111" /><path d="M3 9v3M12 9v3M5 4v1M10 4v1" stroke="#fff" /></svg></Tool>
            </SideTools>
            <Tree aria-label="Model">
              <Node><NodeButton><Icon name="part" />Part45</NodeButton></Node>
              <Node><Branch kind="plus" /><NodeButton><Icon name="view" />View: Master</NodeButton></Node>
              <Node><Branch kind="plus" /><NodeButton><Icon name="folder" />Origin</NodeButton></Node>
              <Node><Branch kind="tee" /><NodeButton><Icon name="sketchSmall" />Sketch1</NodeButton></Node>
              <Node><Branch kind="tee" /><NodeButton><Icon name="sketchSmall" />Sketch2</NodeButton></Node>
              <Node><Branch kind="last" /><NodeButton><Icon name="end" />End of Part</NodeButton></Node>
            </Tree>
          </Side>

          <Main>
            <Canvas>
              <Fill viewBox="256 146 1413 834" role="img" aria-label="Sketch geometry">
                <g fill="none" stroke="#66ff00" strokeWidth="2">
                  <path d="M576 554l39-23v73l92-53v-77l40-22v143l-171 99z" />
                  <path d="M747 508C847 556 949 577 1054 577C1128 577 1200 567 1272 545" />
                </g>
                <path d="M1052 315h4v4h-4z" fill="#66ff00" />
                <path d="M644 562h4v4h-4z" fill="#ffff00" />
              </Fill>
              <DocControls>
                <button aria-label="Minimize document"><svg width="13" height="13"><path d="M1 8h11v3H1z" fill="#eee" /></svg></button>
                <button aria-label="Restore document"><svg width="13" height="13"><path d="M4 1h8v8h-2V3H4zM2 4h7v8H2zM4 6v4h3V6z" fill="#eee" fillRule="evenodd" /></svg></button>
                <button aria-label="Close document"><svg width="13" height="13"><path d="M3 2l8 9M11 2l-8 9" stroke="#eee" strokeWidth="2.500" /></svg></button>
              </DocControls>
              <Cube width="80" height="92" viewBox="1567 192 80 92" role="img" aria-label="View cube">
                <defs><radialGradient id="shade"><stop offset="0" stopColor="#000" stopOpacity=".4" /><stop offset="1" stopColor="#000" stopOpacity="0" /></radialGradient></defs>
                <ellipse cx="1607" cy="262" rx="40" ry="22" fill="url(#shade)" />
                <g stroke="#686868" strokeWidth=".8">
                  <path d="M1607 196l36 16-36 21-36-21z" fill="#8a8a8a" />
                  <path d="M1571 212l36 21v41l-32-22z" fill="#868686" />
                  <path d="M1643 212l-36 21v41l32-22z" fill="#808080" />
                </g>
                <path d="M1600 229l7-3 7 3v7l-7 4-7-4z" fill="#6c7276" opacity=".6" />
                <g fontSize="8" fontWeight="700" fill="#5c5c5c" textAnchor="middle">
                  <text transform="translate(1589 247) skewY(28)">LEFT</text>
                  <text transform="translate(1625 247) skewY(-28)">FRONT</text>
                  <text transform="translate(1608 216) rotate(-24) skewX(20)">TOP</text>
                </g>
              </Cube>
              <NavBar role="toolbar" aria-label="Navigation">
                <svg width="30" height="194" viewBox="0 0 30 194">
                  <circle cx="24" cy="5" r="4" fill="#4b4b4b" /><path d="M22 3l4 4M26 3l-4 4" stroke="#ccc" />
                  <path d="M16 21h9v10a10 10 0 1 1-9-10z" fill="#aaadaf" stroke="#d4d6d8" /><circle cx="15" cy="31" r="5" fill="#b8bbbd" stroke="#5a5a5a" /><path d="M8 38l3-3M22 38l-3-3" stroke="#5a5a5a" />
                  <path d="M12 53h6l-3 3zM12 115h6l-3 3zM12 149h6l-3 3z" fill="#484848" />
                  <path d="M3 59.500h24" stroke="#555" />
                  <path d="M9 74l-1-2 2-1 3 4-2-7 2-1 2 6V66h2l1 7 2-6 2 1-2 7 2-2 2 1-4 7-2 1h-5z" fill="#d8dadb" stroke="#555" strokeWidth=".7" />
                  <circle cx="13.500" cy="97" r="5.500" fill="#aab0b2" stroke="#d0d4d6" strokeWidth="1.500" /><path d="M11 94h3l2 2v4h-5z" fill="#e8e8e8" stroke="#555" strokeWidth=".7" /><path d="M18 101l5 5" stroke="#4c4c4c" strokeWidth="3" />
                  <g fill="none" stroke="#555"><ellipse cx="15" cy="132" rx="3.500" ry="7.500" /><ellipse cx="15" cy="132" rx="7.500" ry="3.500" /><path d="M14 130h4M16 128v4" /></g>
                  <path d="M8 162h15v12H8zM9 161l4-3v2h6l-2 2" fill="#c4c7c9" stroke="#555" /><path d="M11 166h9v4h-9z" fill="#8a8d90" stroke="#444" />
                  <circle cx="24" cy="188" r="4" fill="#4b4b4b" /><path d="M22 187h4M22 188.500h4l-2 2z" stroke="#ccc" strokeWidth=".8" />
                </svg>
              </NavBar>
              <Triad width="60" height="64" viewBox="298 890 60 64" role="img" aria-label="Axes">
                <path d="M309.500 928v-20" stroke="#0a9a14" /><path d="M309.500 903l5 10c-2 2-8 2-10 0z" fill="#0a8a14" />
                <path d="M310 927l12-7" stroke="#b00808" /><path d="M320 914l11 1-5 9-6-3z" fill="#a00606" />
                <path d="M310 928l12 7" stroke="#0808b0" /><path d="M325 930l6 10-11 1v-7z" fill="#0808b0" />
                <g fontSize="11"><text x="306" y="901" fill="#2ce02c">Y</text><text x="331" y="917" fill="#f02424">X</text><text x="331" y="947" fill="#2424f0">Z</text></g>
              </Triad>
            </Canvas>
            <TabStrip>
              <StripButton aria-label="Cascade"><svg width="16" height="16"><path d="M.5 1.500h11v8H.5zM2.500 4.500h11v8h-11zM4.500 7.500h11v8h-11z" fill="#fff" stroke="#444c58" /></svg></StripButton>
              <StripButton aria-label="Arrange"><svg width="16" height="16"><path d="M.5 2.500h6v4h-6zM9.500 2.500h6v4h-6zM.5 9.500h6v4h-6zM9.500 9.500h6v4h-6z" fill="#fff" stroke="#444c58" /></svg></StripButton>
              <StripButton aria-label="Scroll"><svg width="10" height="16"><path d="M0 8l5-5 5 5z" fill="#333" /></svg></StripButton>
              {docs.map(([t, w]) => (
                <DocTab key={t} $w={w} $on={t === "Part45"}>
                  {t}{t === "Part45" && <svg width="8" height="8"><path d="M1 1h6v6H1zM1 1l6 6M7 1L1 7" stroke="#777" fill="none" /></svg>}
                </DocTab>
              ))}
            </TabStrip>
          </Main>
        </Work>

        <Status>
          <Pane>Ready</Pane>
          <Pane $w={36}>1</Pane>
          <Pane $w={36}>49</Pane>
          <svg width="14" height="22" viewBox="0 0 14 22" aria-hidden="true"><path d="M1 21L13 9M5 21l8-8M9 21l4-4" stroke="#808080" strokeWidth="2" /></svg>
        </Status>
      </Window>
    </Desktop>
  );
}
